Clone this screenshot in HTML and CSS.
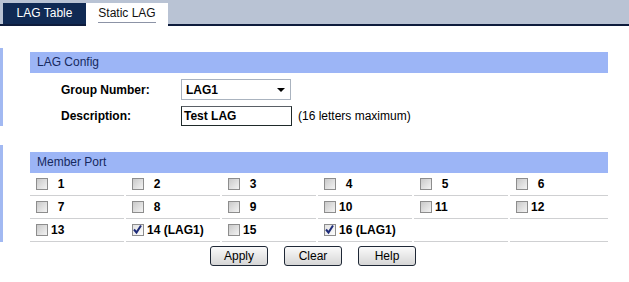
FILE: index.html
```html
<!DOCTYPE html>
<html lang="en">
<head>
    <meta charset="UTF-8">
    <title>Static LAG</title>
    <link rel="stylesheet" href="styles.css">
</head>
<body>
    <div class="tabbar">
        <div class="tab">LAG Table</div>
        <div class="tab active"><span>Static LAG</span></div>
    </div>

    <div class="block block-config">
        <div class="panel-title">LAG Config</div>
        <div class="form">
            <div class="form-row">
                <div class="label">Group Number:</div>
                <div class="select">LAG1<span class="arrow"></span></div>
            </div>
            <div class="form-row">
                <div class="label">Description:</div>
                <div class="input">Test LAG</div>
                <div class="hint">(16 letters maximum)</div>
            </div>
        </div>
    </div>

    <div class="block block-ports">
        <div class="panel-title">Member Port</div>
        <div class="ports">
            <div class="cell"><span class="cb"></span>&nbsp;&nbsp;1</div>
            <div class="cell"><span class="cb"></span>&nbsp;&nbsp;2</div>
            <div class="cell"><span class="cb"></span>&nbsp;&nbsp;3</div>
            <div class="cell"><span class="cb"></span>&nbsp;&nbsp;4</div>
            <div class="cell"><span class="cb"></span>&nbsp;&nbsp;5</div>
            <div class="cell"><span class="cb"></span>&nbsp;&nbsp;6</div>
            <div class="cell"><span class="cb"></span>&nbsp;&nbsp;7</div>
            <div class="cell"><span class="cb"></span>&nbsp;&nbsp;8</div>
            <div class="cell"><span class="cb"></span>&nbsp;&nbsp;9</div>
            <div class="cell"><span class="cb"></span>10</div>
            <div class="cell"><span class="cb"></span>11</div>
            <div class="cell"><span class="cb"></span>12</div>
            <div class="cell"><span class="cb"></span>13</div>
            <div class="cell"><span class="cb checked"><svg width="11" height="11" viewBox="0 0 11 11"><polyline points="2,5.5 4.5,8.5 9,1.5" fill="none" stroke="#1d2b78" stroke-width="2"/></svg></span>14 (LAG1)</div>
            <div class="cell"><span class="cb"></span>15</div>
            <div class="cell"><span class="cb checked"><svg width="11" height="11" viewBox="0 0 11 11"><polyline points="2,5.5 4.5,8.5 9,1.5" fill="none" stroke="#1d2b78" stroke-width="2"/></svg></span>16 (LAG1)</div>
            <div class="cell"></div>
            <div class="cell"></div>
        </div>
    </div>

    <div class="actions">
        <button class="btn">Apply</button>
        <button class="btn">Clear</button>
        <button class="btn">Help</button>
    </div>
</body>
</html>
```

FILE: styles.css
```css
body {
    margin: 0;
    font-family: 'Liberation Sans', Arial, sans-serif;
    font-size: 12px;
    color: #000;
    background-color: #fff;
}
.tabbar {
    display: flex;
    align-items: flex-end;
    height: 24px;
    padding-left: 3px;
    background-color: #b9c3d4;
    border-bottom: 2px solid #0e1c3c;
}
.tab {
    width: 83px;
    height: 21px;
    line-height: 21px;
    text-align: center;
    color: #fff;
    background-color: #102a54;
}
.tab.active {
    width: 82px;
    height: 23px;
    margin-bottom: -2px;
    color: #111;
    background-color: #fff;
    line-height: 20px;
}
.tab.active span {
    display: inline-block;
    line-height: 18px;
    border-bottom: 1px solid #8c93a6;
}
.block {
    border-left: 3px solid #a2b9f2;
    padding-left: 27px;
    width: 578px;
}
.block-config {
    margin-top: 22px;
    padding-top: 4px;
}
.block-ports {
    margin-top: 19px;
    padding-top: 7px;
}
.panel-title {
    height: 21px;
    line-height: 21px;
    padding-left: 7px;
    color: #16295e;
    background-color: #9cb5f6;
}
.form {
    padding: 6px 0 0 31px;
}
.form-row {
    display: flex;
    align-items: center;
    height: 21px;
}
.form-row + .form-row {
    margin-top: 5px;
}
.label {
    width: 120px;
    font-weight: bold;
}
.select {
    display: flex;
    align-items: center;
    justify-content: space-between;
    box-sizing: border-box;
    width: 110px;
    height: 21px;
    padding: 0 5px 0 4px;
    font-weight: bold;
    border: 1px solid #aab3bf;
    background-color: #fff;
}
.arrow {
    width: 0;
    height: 0;
    border-left: 4px solid transparent;
    border-right: 4px solid transparent;
    border-top: 4px solid #000;
}
.input {
    box-sizing: border-box;
    width: 111px;
    height: 20px;
    line-height: 18px;
    padding-left: 2px;
    font-weight: bold;
    border: 1px solid #1f2a2a;
    border-top-color: #5a6066;
}
.hint {
    margin-left: 6px;
}
.ports {
    display: grid;
    grid-template-columns: repeat(5, 94px) 98px;
    column-gap: 2px;
}
.cell {
    display: flex;
    align-items: center;
    height: 22px;
    padding-left: 6px;
    font-weight: bold;
    border-bottom: 1px solid #cfd0d2;
    white-space: nowrap;
}
.cb {
    display: inline-block;
    box-sizing: border-box;
    width: 12px;
    height: 12px;
    margin-right: 3px;
    border: 1px solid #8d8d8d;
    background: linear-gradient(135deg, #c9c9c9, #f3f3f3);
}
.cb.checked {
    background: linear-gradient(135deg, #e2e2e2, #fdfdfd);
}
.cb svg {
    display: block;
    margin: -1px 0 0 -1px;
}
.actions {
    display: flex;
    gap: 16px;
    padding: 4px 0 0 210px;
}
.btn {
    width: 58px;
    height: 20px;
    padding: 0;
    font-family: 'Liberation Sans', Arial, sans-serif;
    font-size: 12px;
    color: #000;
    border: 1px solid #1f2836;
    border-radius: 3px;
    background: linear-gradient(#fafafa, #d6d6d6);
}
```
